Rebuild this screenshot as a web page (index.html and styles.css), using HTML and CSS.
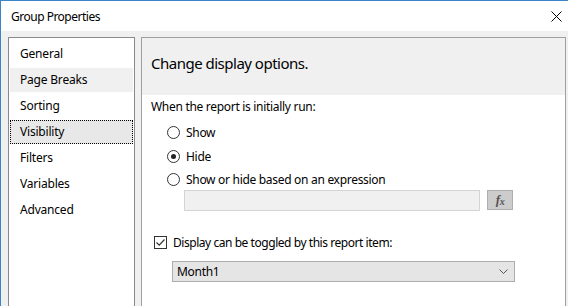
FILE: index.html
```html
<html lang="en">
    <head>
        <meta charset="UTF-8">
        <title>Group Properties</title>
        <link rel="stylesheet" href="styles.css">
    </head>
    <body>
        <div class="window">
            <!--title bar-->
            <div class="titlebar">
                <span class="title">Group Properties</span>
                <svg class="close" width="11" height="11" viewBox="0 0 11 11">
                    <path d="M0.5 0.5 L10.5 10.5 M10.5 0.5 L0.5 10.5" stroke="#000" stroke-width="1" fill="none"/>
                </svg>
            </div>

            <div class="content">
                <!--page list on the left-->
                <ul class="nav">
                    <li>General</li>
                    <li class="hover">Page Breaks</li>
                    <li>Sorting</li>
                    <li class="selected">Visibility</li>
                    <li>Filters</li>
                    <li>Variables</li>
                    <li>Advanced</li>
                </ul>

                <!--visibility page-->
                <div class="panel">
                    <div class="panel-header">Change display options.</div>
                    <div class="panel-body">
                        <div class="label">When the report is initially run:</div>
                        <div class="radios">
                            <div class="radio-row"><span class="radio"></span>Show</div>
                            <div class="radio-row"><span class="radio checked"></span>Hide</div>
                            <div class="radio-row"><span class="radio"></span>Show or hide based on an expression</div>
                        </div>
                        <div class="expr-row">
                            <div class="expr-box"></div>
                            <div class="fx-button"><i>f</i><i class="x">x</i></div>
                        </div>
                        <div class="check-row">
                            <svg class="checkbox" width="13" height="13" viewBox="0 0 13 13">
                                <rect x="0.5" y="0.5" width="12" height="12" fill="#fff" stroke="#333"/>
                                <path d="M2.5 6.5 L5.2 9.2 L10.5 3.5" stroke="#333" stroke-width="1.2" fill="none"/>
                            </svg>
                            Display can be toggled by this report item:
                        </div>
                        <div class="dropdown">
                            <span>Month1</span>
                            <svg width="9" height="5" viewBox="0 0 9 5">
                                <path d="M0.5 0.5 L4.5 4.5 L8.5 0.5" stroke="#555" stroke-width="1" fill="none"/>
                            </svg>
                        </div>
                    </div>
                </div>
            </div>
        </div>
    </body>
</html>
```

FILE: styles.css
```css
body {
    margin: 0;
    padding: 0;
    width: 568px;
    height: 306px;
    overflow: hidden;
    font-family: 'Noto Sans', sans-serif;
    font-size: 12px;
    letter-spacing: -0.3px; /*closer to segoe ui widths*/
    color: #000;
}

.window {
    height: 305px;
    background-color: #f0f0f0;
    border-top: 1px solid #3c84c8; /*blue window frame*/
    border-left: 1px solid #3c84c8;
    display: flex;
    flex-direction: column;
}

.titlebar {
    height: 30px;
    background-color: #fff;
    display: flex;
    align-items: center;
    justify-content: space-between;
    padding: 0 6px 0 10px;
}

.title {
    letter-spacing: -0.5px;
}

.content {
    flex-grow: 1;
    display: flex;
    padding: 6px 0 0 7px;
    gap: 6px;
}

/* left side page list */
.nav {
    list-style-type: none;
    margin: 0;
    padding: 4px 1px 0 1px;
    width: 123px;
    background-color: #fff;
    border: 1px solid #8a8a8a;
    border-bottom: none;
    display: flex;
    flex-direction: column;
    gap: 2px;
}

.nav li {
    height: 24px;
    line-height: 24px;
    padding-left: 10px;
    letter-spacing: -0.2px;
    box-sizing: border-box;
}

.nav li.hover {
    background-color: #f0f0f0;
}

.nav li.selected {
    background-color: #e8e8e8;
    border: 1px dotted #000; /*focus rectangle*/
    line-height: 22px;
    padding-left: 9px;
}

/* right side panel */
.panel {
    width: 423px;
    border: 1px solid #a0a0a0;
    border-bottom: none;
    background-color: #fff;
    display: flex;
    flex-direction: column;
}

.panel-header {
    height: 57px;
    background-color: #f0f0f0;
    font-size: 15px;
    line-height: 50px;
    padding-left: 9px;
    letter-spacing: -0.5px;
}

.panel-body {
    padding: 4px 0 0 9px;
}

.label {
    line-height: 16px;
}

.radios {
    margin-top: 6px;
    padding-left: 16px;
}

.radio-row {
    height: 23.5px;
    display: flex;
    align-items: center;
}

.radio {
    width: 11px;
    height: 11px;
    border: 1px solid #333;
    border-radius: 50%;
    margin-right: 6px;
    position: relative;
    box-sizing: content-box;
}

.radio.checked::after {
    content: "";
    position: absolute;
    left: 3px;
    top: 3px;
    width: 5px;
    height: 5px;
    border-radius: 50%;
    background-color: #222;
}

.expr-row {
    display: flex;
    gap: 7px;
    margin: -2px 0 0 33px;
}

.expr-box {
    width: 294px;
    height: 19px;
    background-color: #f0f0f0;
    border: 1px solid #d4d4d4;
}

.fx-button {
    width: 24px;
    height: 18px;
    background-color: #cccccc;
    border: 1px solid #adadad;
    font-family: 'Liberation Serif', serif;
    font-size: 13px;
    font-weight: bold;
    color: #555;
    display: flex;
    align-items: center;
    justify-content: center;
}

.fx-button .x {
    font-size: 10px;
    margin-top: 3px;
}

.check-row {
    display: flex;
    align-items: center;
    margin: 25px 0 0 3px;
    height: 14px;
    letter-spacing: -0.45px;
}

.checkbox {
    margin-right: 6px;
}

.dropdown {
    width: 331px;
    height: 19px;
    margin: 11px 0 0 21px;
    background-color: #e5e5e5;
    border: 1px solid #adadad;
    display: flex;
    align-items: center;
    justify-content: space-between;
    padding: 0 6px 0 4px;
    box-sizing: content-box;
}
```
